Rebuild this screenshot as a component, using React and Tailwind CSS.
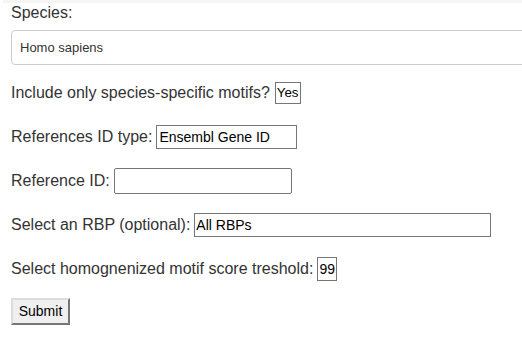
export default function App() {
  const box = 'border border-[#767676] text-black text-[13.33px] leading-none flex items-center'
  return (
    <div className="w-[522px] h-[337px] overflow-hidden bg-white text-[16px] text-[#333] font-['Liberation_Sans',Arial,sans-serif]">
      <div className="h-[3px] ml-[3px] bg-[#f5f5f5]" />
      <div className="pl-[11px]">
        <div className="pt-[1px] h-[27px] leading-[18px]">Species:</div>
        <div className="w-[540px] h-[35px] border border-[#ccc] rounded-[4px] pl-[8px] flex items-center text-[13px] text-[#333]">
          Homo sapiens
        </div>

        <div className="mt-[6px] h-[44px] flex items-center">
          <span>Include only species-specific motifs?</span>
          <span className={`${box} ml-[5px] h-[22px] px-[1px]`}>Yes</span>
        </div>

        <div className="h-[44px] flex items-center">
          <span>References ID type:</span>
          <span className={`${box} ml-[4px] w-[141px] h-[24px] pl-[2px] text-[14px]`}>Ensembl Gene ID</span>
        </div>

        <div className="h-[44px] flex items-center">
          <span>Reference ID:</span>
          <span className={`${box} ml-[4px] w-[178px] h-[26px] rounded-[2px]`} />
        </div>

        <div className="h-[44px] flex items-center">
          <span>Select an RBP (optional):</span>
          <span className={`${box} ml-[4px] w-[297px] h-[24px] pl-[1px] text-[14px]`}>All RBPs</span>
        </div>

        <div className="h-[44px] flex items-center">
          <span>Select homognenized motif score treshold:</span>
          <span className={`${box} ml-[4px] h-[24px] px-[1px] text-[14px]`}>99</span>
        </div>

        <button className="mt-[7px] w-[59px] h-[27px] flex items-center justify-center bg-[#efefef] text-black text-[14px] border-2 border-t-[#dcdcdc] border-l-[#dcdcdc] border-b-[#767676] border-r-[#767676]">
          Submit
        </button>
      </div>
    </div>
  )
}
